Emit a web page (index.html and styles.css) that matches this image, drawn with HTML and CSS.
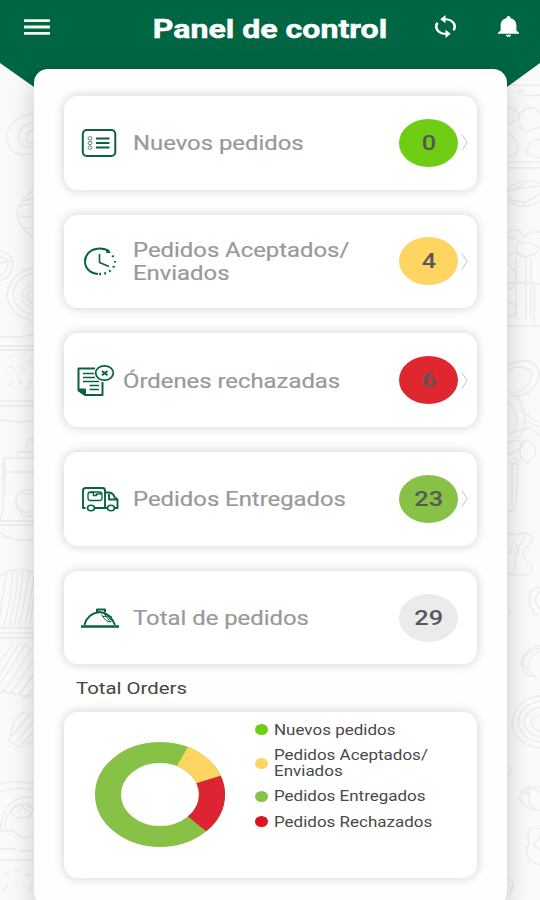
FILE: index.html
```
<!DOCTYPE html>
<html lang="es">
<head>
<meta charset="utf-8">
<title>Panel de control</title>
<link rel="stylesheet" href="styles.css">
</head>
<body>
<div class="screen">
  <svg class="backdrop" viewBox="0 0 540 900" aria-hidden="true">
    <g class="doodle">
      <path d="M34 115q-4-3-7 1q-5-2-7 3q-5-1-6 5q-6 0-4 6q-6 2-2 7q-5 4 1 7q-2 6 4 6q1 6 6 3q4 5 8 0q4 3 7-1M34 123q-13 1-16 12q1 12 11 12l5-2M34 130q-9 2-8 9q2 5 8 5"/>
      <path d="M34 190q-17 12-17 24q2 14 17 24M18 207q8-4 16-2M17 215q8 3 17 1M21 226q6 4 13 1M23 201l11-3"/>
      <path d="M0 251q11 2 13 13q-1 13-13 17M0 257q7 1 8 6q-1 10-8 12M0 263l12-2"/>
      <path d="M34 268q-25 4-27 28q3 21 27 25M34 273q-20 5-21 22q2 16 21 20M34 284q-12 4-12 13q1 9 12 12M34 289q-7 3-7 8q1 5 7 7"/>
      <path d="M0 337h20l14-3M0 346h34M0 350h34M8 358l5-3M20 356l6-2M5 369l5-2M12 366l3 5M21 367l5 4M28 364l5-2M9 386l4-3M18 379l4 5M29 379l3 4M24 390l5-3M0 401h34M0 406h34M0 420q15 3 34 1"/>
      <path d="M26 450l1-10h7M34 452H18l-2 6H3v42M5 459v37M16 458h18M5 472h29M34 490q-14-1-18 8q-1 13 10 19l8-2M20 492q7 4 14 0M14 500q8 18 20 10M3 480v30l-3 12M0 521h34M0 525h34M4 535q13 7 30 5M0 532l7 7"/>
      <path d="M0 577l8-7l5 1l6-2l6 2l9 1M7 571q-5 25-7 45M13 571q-1 25-9 54M18 571q-1 24-9 55M23 571q-2 24-9 55M29 571q-3 24-10 55M34 575q-3 28-9 50M34 596l-4 29M0 628h34M0 633h34M0 638h34M0 662l14-20M0 675l20-33M0 684l27-42M3 693l31-48M10 694l24-34M19 695l15-21M26 699l8-12M0 693q5-6 7 1q5-4 8 1q5-3 9 2q4-4 10 1"/>
      <path d="M34 716l-11-4l-9 9l-5 20l11 6l14-6M12 736l18-22M17 741l17-20M22 744l12-13"/>
      <path d="M0 784q17-5 34 0M0 792q16-6 34-2M0 830Q4 794 34 797M5 829q-1-26 29-25M11 810q4-7 11-6q9 2 11 6q-3 9-13 8q-9-2-9-8M17 812l6-5l5 5M0 831q14-2 18 4t16 0M0 849h16M20 851h14M0 860h34M3 875l6-3M15 872l5-2M24 876l6-2M2 890l6-4M15 886l3-2M27 890l5-3"/>
      <path d="M507 85h33M520 89v3M523 89v3M515 92q12 5 25 3M507 107q12 1 12 13l-12 4M519 115l7-7h9l5 6M519 126l7 6l14-5M507 134q12 4 11 15q-2 9-11 6M540 139q-15 2-13 15l13 4M507 162h33M507 168h33"/>
      <path d="M507 190q14-14 33-7M507 197q16 12 33-4M507 191q17-4 33-5M516 189l10-7M507 200q16 12 33 1M519 200l6 5"/>
      <path d="M507 233q11-8 17 4q7-7 16-5M507 239q9-5 14 6M517 244q-2 13 8 13q13-2 14-9q-11-8-22-4M507 257q9-8 18 0M509 265q10 8 6 18q-4 9-8 5M526 257v63M531 259v57M516 257v61M507 283h27v42M507 302q11 2 9 9q-2 6-9 5M507 326h33M533 284h7"/>
      <path d="M507 365q20-9 29 1q8 12-5 24q-7 7-18 6M507 370q16-6 23 1q6 10-13 22M507 391q16 5 18 28q-1 15-9 20M507 402q10 6 10 21q-1 9-7 11M521 411l17 11M526 421l13 6M510 433l19-5l11 8M507 443q13-5 17 1q-7 9-17 10M521 444q-4 17 7 18q11-6 6-17q-7-9-13-1M514 457l5 5M510 464h8l-2 39q-1 9-9 8M512 467v40"/>
      <path d="M507 533l9 2q7-4 15 0l2 5q-8 8-10 13q0 7 8 10l2 9q-9 5-26 1M514 541l4 8q-4 8-3 23M525 535l-10 20M507 555q7-5 1-10"/>
      <path d="M540 588l-5-1l-3 5l-3-1l2 7l-3 1l3 4l-2 3l4 3l0 5l5 1M540 591q-9 9 0 18M540 648q-18 4-17 18l14 13M540 645q-21 6-18 23q4 10 13 8M540 651q-12 5-12 17"/>
      <path d="M540 696q-23 2-28 26q1 22 28 26M540 701q-20 4-22 21q3 18 22 20M540 707q-15 4-16 15q2 12 16 15M540 715q-9 3-9 8q2 7 9 8"/>
      <path d="M540 787q-17-3-20 9q-1 10 15 14M520 794l10-2q-4 17 10 18M525 791q8-5 15 1M540 829q-14-5-12 9q2 6-1 10q-2 13 13 17M540 837l-7 8l7 5M507 606q6 5 1 9M507 765q8 5 0 10M507 878q12 5 0 17"/>
    </g>
    <path class="canopy" d="M0 0H540V63L507 87H34L0 63Z"/>
  </svg>

  <header class="topbar">
    <svg class="menu" viewBox="0 0 26 16"><path d="M0 1.7h26M0 8h26M0 14.3h26"/></svg>
    <h1 class="title"><span class="wide-center">Panel de control</span></h1>
    <svg class="sync" viewBox="1 1 22 22" preserveAspectRatio="none"><path d="M12 4V1L8 5l4 4V6c3.31 0 6 2.69 6 6 0 1.01-.25 1.97-.7 2.8l1.46 1.46C19.54 15.03 20 13.57 20 12c0-4.42-3.58-8-8-8zm0 14c-3.31 0-6-2.69-6-6 0-1.01.25-1.97.7-2.8L5.24 7.74C4.46 8.97 4 10.43 4 12c0 4.42 3.58 8 8 8v3l4-4-4-4v3z"/></svg>
    <svg class="bell" viewBox="4 2.5 16 19.5" preserveAspectRatio="none"><path d="M12 22c1.1 0 2-.9 2-2h-4c0 1.1.89 2 2 2zm6-6v-5c0-3.07-1.64-5.64-4.5-6.32V4c0-.83-.67-1.5-1.5-1.5s-1.5.67-1.5 1.5v.68C7.63 5.36 6 7.92 6 11v5l-2 2v1h16v-1l-2-2z"/></svg>
  </header>

  <main class="panel">
    <section class="cards">
      <article class="card">
        <svg class="icon" viewBox="0 0 40 32"><rect x="3.8" y="3" width="32.5" height="26" rx="4" stroke-width="2"/><path d="M17 11.5h13.500M17 16h13.500M17 20.500h13.500" stroke-width="2"/><g stroke-width=".7"><ellipse cx="11" cy="11.300" rx="2" ry="1.700"/><ellipse cx="11" cy="16" rx="2" ry="1.700"/><ellipse cx="11" cy="20.700" rx="2" ry="1.700"/></g></svg>
        <p class="label"><span class="wide">Nuevos pedidos</span></p>
        <div class="badge lime"><span class="wide-center">0</span></div>
        <svg class="chevron" viewBox="0 0 8 20"><path d="M1 1l6 9l-6 9"/></svg>
      </article>
      <article class="card">
        <svg class="icon" viewBox="0 0 40 32"><path d="M30.500 6.500Q26 3.300 20 3.500C11 4 6 10 6 16.500S11 28.500 19 29" stroke-width="2"/><path d="M28 4.500l4 3.500h-5z" fill="#08643f" stroke="none"/><path d="M20.500 9v8.500l9.500 4" stroke-width="1.600"/><path d="M33.500 10.500l.8 1.500M36 16v1.500M35 21l-.7 1.600M31.500 25.500l-1.300 1M27 28l-1.800.6M22 29h-1.800" stroke-width="2.300"/></svg>
        <p class="label"><span class="wide">Pedidos Aceptados/<br>Enviados</span></p>
        <div class="badge amber"><span class="wide-center">4</span></div>
        <svg class="chevron" viewBox="0 0 8 20"><path d="M1 1l6 9l-6 9"/></svg>
      </article>
      <article class="card snug">
        <svg class="icon" viewBox="0 0 40 32"><path d="M20 4.500H3.500v22l6.500 4.500h17.500V18M3.500 25.500H10v5" stroke-width="2"/><path d="M4 26h5.500v4.500z" fill="#08643f" stroke="none"/><path d="M8 9.500h11M8 13.500h12M8 17.500h16M14.500 21.500h9.500M14.500 25.500h9.500" stroke-width="1.400"/><ellipse cx="29.500" cy="9" rx="8.800" ry="7.200" stroke-width="1.800"/><path d="M27 7l5.500 4.200M32.500 7L27 11.200" stroke-width="2"/></svg>
        <p class="label"><span class="wide">Órdenes rechazadas</span></p>
        <div class="badge red"><span class="wide-center">6</span></div>
        <svg class="chevron" viewBox="0 0 8 20"><path d="M1 1l6 9l-6 9"/></svg>
      </article>
      <article class="card">
        <svg class="icon" viewBox="0 0 40 32"><path d="M6.500 25H4V7.500Q4 5 7 5h16.500q2.500 0 2.500 2.500V25H16M26 9.500h4.500Q34 10 35.500 14l3 2.500V25H36M26 25h2.500M30 11v5.500h8" stroke-width="1.900"/><rect x="9" y="9" width="14" height="8.500" rx="2.500" stroke-width="1.300"/><path d="M11 9.500h3.500v3h3v-1.500h5" stroke-width="1.500"/><ellipse cx="12" cy="25" rx="3.500" ry="2.800" stroke-width="1.600"/><ellipse cx="32" cy="25" rx="3.500" ry="2.800" stroke-width="1.600"/></svg>
        <p class="label"><span class="wide">Pedidos Entregados</span></p>
        <div class="badge green"><span class="wide-center">23</span></div>
        <svg class="chevron" viewBox="0 0 8 20"><path d="M1 1l6 9l-6 9"/></svg>
      </article>
      <article class="card">
        <svg class="icon" viewBox="0 0 40 32"><path d="M5.500 23Q8 12 20 10Q27 10.500 31 15Q34.500 18.500 36 23" stroke-width="1.900"/><path d="M2 24.500H40" stroke-width="2.500"/><path d="M18 10V7.500h8V10" stroke-width="2"/><path d="M23 10.500l10 4.500M22.500 12.500q5 9 10 7M25 11.500l5.500 7.500M28 12.500l4 6M24 14.500l7-.5" stroke-width="1"/></svg>
        <p class="label"><span class="wide">Total de pedidos</span></p>
        <div class="badge gray"><span class="wide-center">29</span></div>
        <span class="chevron"></span>
      </article>
    </section>

    <h2 class="subtitle"><span class="wide">Total Orders</span></h2>

    <section class="summary">
      <svg class="donut" viewBox="0 0 105 105" preserveAspectRatio="none">
        <g transform="rotate(-90 52.500 52.500)">
          <circle cx="52.500" cy="52.500" r="42" pathLength="360" stroke="#87c146"/>
          <circle cx="52.500" cy="52.500" r="42" pathLength="360" stroke="#fdd560" stroke-dasharray="43.600 360" stroke-dashoffset="-25.500"/>
          <circle cx="52.500" cy="52.500" r="42" pathLength="360" stroke="#dd2433" stroke-dasharray="65.500 360" stroke-dashoffset="-69.100"/>
        </g>
      </svg>
      <ul class="legend">
        <li><i class="dot lime"></i><span class="wide">Nuevos pedidos</span></li>
        <li><i class="dot amber"></i><span class="wide">Pedidos Aceptados/<br>Enviados</span></li>
        <li><i class="dot green"></i><span class="wide">Pedidos Entregados</span></li>
        <li><i class="dot crimson"></i><span class="wide">Pedidos Rechazados</span></li>
      </ul>
    </section>
  </main>
</div>
</body>
</html>
```
FILE: styles.css
```
* { box-sizing: border-box; }

body {
  margin: 0;
  font-family: Roboto, "Liberation Sans", sans-serif;
}

h1, h2, p, ul {
  margin: 0;
  padding: 0;
  font-weight: 400;
}

.screen {
  position: relative;
  width: 540px;
  height: 900px;
  overflow: hidden;
  background: #fafafa;
}

.backdrop {
  position: absolute;
  inset: 0;
  width: 540px;
  height: 900px;
}

.doodle {
  fill: none;
  stroke: #ececec;
  stroke-width: 1.3;
  stroke-linejoin: round;
}

.canopy { fill: #006543; }

.wide,
.wide-center {
  display: inline-block;
  white-space: nowrap;
  transform: scaleX(1.235);
  transform-origin: left center;
}

.wide-center { transform-origin: center; }

.topbar {
  position: relative;
  display: flex;
  align-items: center;
  height: 69px;
  padding: 0 20px 15px 24px;
}

.menu {
  width: 26px;
  height: 16px;
  fill: none;
  stroke: #f1f8ea;
  stroke-width: 2.8;
}

.title {
  flex: 1;
  padding-left: 59px;
  margin-top: 3px;
  text-align: center;
  font-size: 26px;
  line-height: 32px;
  color: #fff;
  -webkit-text-stroke: .5px #fff;
}

.title span { font-weight: 700; }

.sync {
  width: 29px;
  height: 23px;
  margin-right: 38px;
  margin-top: -2px;
  fill: #fff;
}

.bell {
  width: 21px;
  height: 21px;
  margin-right: 1px;
  margin-top: -1px;
  fill: #fff;
}

.panel {
  position: relative;
  width: 473px;
  height: 837px;
  margin-left: 34px;
  padding: 27px 30px 0;
  border-radius: 14px;
  background: #fefefe;
  box-shadow: 0 9px 26px rgba(0, 0, 0, .2);
}

.cards {
  display: flex;
  flex-direction: column;
  gap: 25.200px;
}

.card,
.summary {
  border-radius: 14px;
  background: #fff;
  box-shadow: 0 0 9px 2px rgba(0, 0, 0, .13);
}

.card {
  display: flex;
  align-items: center;
  height: 93.500px;
  padding: 0 9px 0 15px;
}

.icon {
  width: 40px;
  height: 32px;
  margin-right: 13.500px;
  fill: none;
  stroke: #08643f;
  stroke-linejoin: round;
}

.snug { padding-left: 11px; }
.snug .icon { margin-right: 8px; }

.label {
  flex: 1;
  padding-top: 2px;
  font-size: 20px;
  line-height: 23px;
  color: #999;
  -webkit-text-stroke: .2px #999;
}

.label .wide { transform: scaleX(1.193); }

.badge {
  display: flex;
  align-items: center;
  justify-content: center;
  width: 59px;
  height: 48px;
  margin-right: 3px;
  border-radius: 50%;
  font-size: 20.500px;
  font-weight: 500;
  color: #575757;
}

.lime { background: #6fcd13; }
.amber { background: #fdd560; }
.red { background: #e02730; }
.green { background: #87c146; }
.gray { background: #ebebeb; }
.crimson { background: #d71424; }

.chevron {
  width: 7px;
  height: 19px;
  fill: none;
  stroke: #bbb;
  stroke-width: 1;
}

.subtitle {
  height: 47.700px;
  padding: 15px 0 0 12px;
  font-size: 16.500px;
  line-height: 20px;
  color: #454545;
}

.summary {
  display: flex;
  height: 166px;
  padding: 10px 0 0 31px;
}

.donut {
  width: 130px;
  height: 105px;
  margin: 20px 30px 0 0;
  fill: none;
  stroke-width: 21;
}

.legend {
  display: flex;
  flex-direction: column;
  gap: 9.200px;
  list-style: none;
  font-size: 14px;
  line-height: 16px;
  color: #484848;
}

.legend .wide { transform: scaleX(1.213); }

.legend li {
  display: flex;
  align-items: center;
}

.dot {
  width: 13px;
  height: 11px;
  margin-right: 6px;
  border-radius: 50%;
}
```
